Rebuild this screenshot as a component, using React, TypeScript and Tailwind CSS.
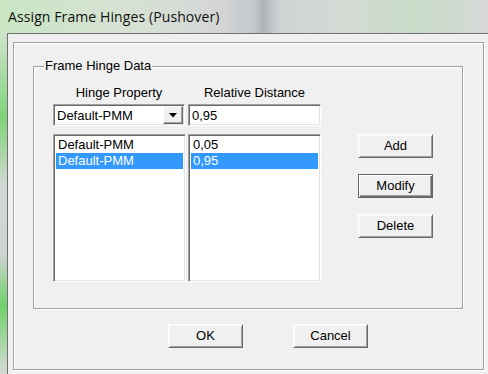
const sunken =
  "border border-t-[#a0a0a0] border-l-[#a0a0a0] border-b-white border-r-white shadow-[inset_1px_1px_0_#696969,inset_-1px_-1px_0_#e3e3e3] bg-white";

function WinButton({ label, isDefault }: { label: string; isDefault?: boolean }) {
  return (
    <button
      className={
        isDefault
          ? "w-[75px] h-[24px] bg-[#f0f0f0] border border-[#646464] shadow-[inset_1px_1px_0_#fff,inset_-1px_-1px_0_#696969,inset_-2px_-2px_0_#a0a0a0] text-[13px] text-black"
          : "w-[75px] h-[24px] bg-[#f0f0f0] border border-t-white border-l-white border-b-[#696969] border-r-[#696969] shadow-[inset_1px_1px_0_#f8f8f8,inset_-1px_-1px_0_#a0a0a0] text-[13px] text-black"
      }
    >
      {label}
    </button>
  );
}

export default function App() {
  const props = ["Default-PMM", "Default-PMM"];
  const dists = ["0,05", "0,95"];

  return (
    <div className="w-[488px] h-[374px] flex flex-col overflow-hidden font-['Liberation_Sans',Arial,sans-serif] text-black">
      {/* title bar */}
      <div className="h-[33px] shrink-0 flex items-center pl-[8px] pb-[1px] bg-[linear-gradient(90deg,#c9e6c4_0%,#d6e2d3_25%,#d4d6d6_45%,#c4c8cb_52%,#aeb3b8_54%,#cfd2d3_57%,#d5dad5_70%,#c8dcc8_85%,#d6d8d8_100%)]">
        <span className="font-['Open_Sans',sans-serif] text-[14px] tracking-[0.1px] text-[#111]">
          Assign Frame Hinges (Pushover)
        </span>
      </div>

      <div className="flex flex-1">
        {/* window frame edge */}
        <div className="w-[7px] shrink-0 bg-[linear-gradient(180deg,#cfe3cc_0%,#7fd37a_25%,#d4d8d4_45%,#d0d4d0_65%,#6fd06a_80%,#d6dad6_100%)]" />

        {/* client area */}
        <div className="flex-1 bg-[#f0f0f0] border-t border-l border-[#707070] pl-[5px] pt-[8px]">
          <div className="w-[471px] h-[328px] border border-[#a0a0a0] shadow-[1px_1px_0_#fff,inset_1px_1px_0_#fff] flex flex-col">
            {/* group box */}
            <div className="relative ml-[19px] mt-[23px] w-[430px] h-[243px] border border-[#a0a0a0] shadow-[1px_1px_0_#fff,inset_1px_1px_0_#fff] pl-[19px] pt-[18px] flex gap-[37px]">
              <span className="absolute left-[10px] -top-[9px] px-[1px] bg-[#f0f0f0] text-[13px] leading-[16px]">
                Frame Hinge Data
              </span>

              <div className="flex flex-col">
                <div className="flex gap-[3px] text-[13px] leading-[16px]">
                  <div className="w-[132px] text-center">Hinge Property</div>
                  <div className="w-[133px] text-center">Relative Distance</div>
                </div>

                <div className="flex gap-[3px] mt-[3px]">
                  {/* combo box */}
                  <div className={`w-[132px] h-[22px] flex items-center ${sunken}`}>
                    <span className="flex-1 pl-[3px] text-[13px] leading-none">Default-PMM</span>
                    <div className="w-[20px] h-[18px] mr-[1px] bg-[#f0f0f0] border border-t-white border-l-white border-b-[#696969] border-r-[#696969] shadow-[inset_-1px_-1px_0_#a0a0a0] flex items-center justify-center">
                      <svg width="8" height="5" viewBox="0 0 8 5">
                        <path d="M0 0H8L4 4.5Z" fill="#000" />
                      </svg>
                    </div>
                  </div>
                  {/* text field */}
                  <div className={`w-[133px] h-[22px] flex items-center pl-[3px] text-[13px] leading-none ${sunken}`}>
                    0,95
                  </div>
                </div>

                <div className="flex gap-[2px] mt-[8px]">
                  <div className={`w-[133px] h-[148px] p-[2px] ${sunken}`}>
                    {props.map((p, i) => (
                      <div
                        key={i}
                        className={
                          i === 1
                            ? "h-[16px] pl-[2px] text-[13px] leading-[16px] bg-[#3399ff] text-white"
                            : "h-[16px] pl-[2px] text-[13px] leading-[16px]"
                        }
                      >
                        {p}
                      </div>
                    ))}
                  </div>
                  <div className={`w-[133px] h-[148px] p-[2px] ${sunken}`}>
                    {dists.map((d, i) => (
                      <div
                        key={i}
                        className={
                          i === 1
                            ? "h-[16px] pl-[2px] text-[13px] leading-[16px] bg-[#3399ff] text-white"
                            : "h-[16px] pl-[2px] text-[13px] leading-[16px]"
                        }
                      >
                        {d}
                      </div>
                    ))}
                  </div>
                </div>
              </div>

              <div className="flex flex-col gap-[16px] pt-[49px]">
                <WinButton label="Add" />
                <WinButton label="Modify" isDefault />
                <WinButton label="Delete" />
              </div>
            </div>

            <div className="flex gap-[50px] ml-[154px] mt-[15px]">
              <WinButton label="OK" />
              <WinButton label="Cancel" />
            </div>
          </div>
        </div>
      </div>
    </div>
  );
}
